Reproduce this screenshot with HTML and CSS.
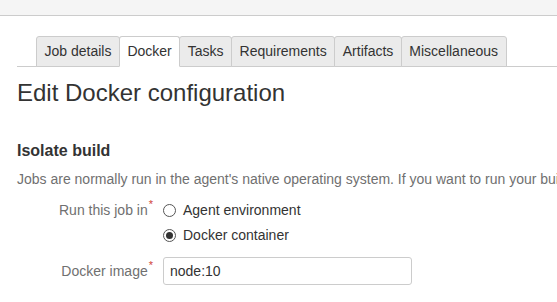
FILE: index.html
```html
<!DOCTYPE html>
<html>
<head>
<meta charset="utf-8">
<link rel="stylesheet" href="styles.css">
</head>
<body>
<div class="topbar"></div>
<div class="content">
  <div class="tabs">
    <div class="tab">Job details</div>
    <div class="tab active">Docker</div>
    <div class="tab">Tasks</div>
    <div class="tab">Requirements</div>
    <div class="tab">Artifacts</div>
    <div class="tab">Miscellaneous</div>
  </div>
  <h1 class="title">Edit Docker configuration</h1>
  <h2 class="section">Isolate build</h2>
  <p class="desc">Jobs are normally run in the agent's native operating system. If you want to run your build in a Docker container, select it here.</p>
  <div class="form">
    <div class="row radios-row">
      <div class="label">Run this job in<span class="req">*</span></div>
      <div class="radios">
        <label class="radio"><span class="circle"></span>Agent environment</label>
        <label class="radio"><span class="circle checked"></span>Docker container</label>
      </div>
    </div>
    <div class="row input-row">
      <div class="label">Docker image<span class="req">*</span></div>
      <div class="input">node:10</div>
    </div>
  </div>
</div>
</body>
</html>
```
FILE: styles.css
```css
html, body {
  margin: 0;
  padding: 0;
  overflow: hidden;
  background: #fff;
}
body {
  font-family: "Liberation Sans", Arial, sans-serif;
  color: #333;
  font-size: 14px;
}
.topbar {
  height: 15px;
  background: #f5f5f5;
  border-bottom: 1px solid #ccc;
}
.content {
  padding-left: 17px;
}
.tabs {
  display: flex;
  align-items: flex-end;
  margin-top: 20px;
  padding-left: 19px;
  border-bottom: 1px solid #ccc;
  height: 30px;
}
.tab {
  height: 29px;
  line-height: 29px;
  padding: 0 7.5px;
  background: #ebebeb;
  border: 1px solid #ccc;
  border-radius: 3px 3px 0 0;
  margin-bottom: -1px;
  margin-right: -1px;
  color: #333;
  font-size: 14px;
  white-space: nowrap;
}
.tab.active {
  background: #fff;
  border-bottom-color: #fff;
  position: relative;
  z-index: 1;
}
.title {
  margin: 12px 0 0;
  font-size: 24px;
  line-height: 28px;
  font-weight: normal;
  color: #333;
}
.section {
  margin: 34px 0 0;
  font-size: 16px;
  line-height: 20px;
  font-weight: bold;
  color: #333;
}
.desc {
  margin: 8px 0 0;
  font-size: 14px;
  line-height: 20px;
  color: #707070;
  white-space: nowrap;
}
.form {
  margin-top: 11px;
  display: flex;
  flex-direction: column;
  gap: 12px;
}
.row {
  display: flex;
  gap: 10px;
}
.label {
  width: 136px;
  text-align: right;
  color: #707070;
  line-height: 20px;
  white-space: nowrap;
}
.input-row .label {
  line-height: 28px;
}
.req {
  color: #d04437;
  font-size: 11px;
  vertical-align: 7px;
  line-height: 0;
  margin-left: 1px;
}
.radios {
  display: flex;
  flex-direction: column;
  gap: 5px;
}
.radio {
  display: flex;
  align-items: center;
  gap: 7px;
  line-height: 20px;
  color: #333;
}
.circle {
  width: 11px;
  height: 11px;
  border: 1px solid #555;
  border-radius: 50%;
  background: #fff;
  display: inline-flex;
  align-items: center;
  justify-content: center;
}
.circle.checked::after {
  content: "";
  width: 7px;
  height: 7px;
  border-radius: 50%;
  background: #333;
}
.input {
  width: 241px;
  height: 26px;
  line-height: 26px;
  border: 1px solid #ccc;
  border-radius: 3px;
  padding: 0 0 0 6px;
  color: #333;
}
```
